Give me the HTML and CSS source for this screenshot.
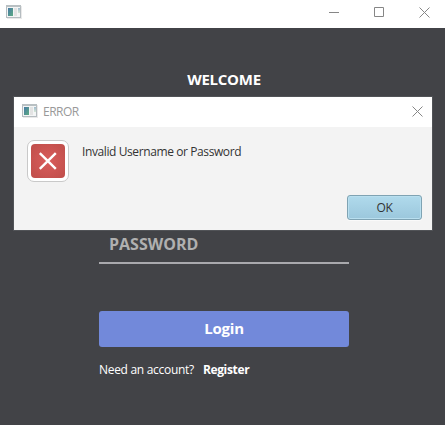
FILE: index.html
```html
<!DOCTYPE html>
<html lang="en">
<head>
<meta charset="utf-8">
<title>Login</title>
<link rel="stylesheet" href="styles.css">
</head>
<body>
<svg width="0" height="0" class="defs">
  <defs>
    <linearGradient id="pane" x1="0" y1="0" x2="1" y2="1"><stop offset="0" stop-color="#4779a5"/><stop offset="1" stop-color="#5cab82"/></linearGradient>
    <linearGradient id="side" x1="0" y1="0" x2="0" y2="1"><stop offset="0" stop-color="#9fbbd0"/><stop offset="1" stop-color="#d5e6d4"/></linearGradient>
    <symbol id="app" viewBox="0 0 16 14">
      <rect x="1" y="1" width="15" height="13" fill="#e9e9e9"/>
      <rect x=".5" y=".5" width="14" height="12" fill="#f3f5f5" stroke="#b5bcc0"/>
      <rect x="0" y="0" width="15" height="2" fill="#b9c0c3"/>
      <rect x="2" y="3" width="5" height="8" fill="url(#pane)"/>
      <rect x="8" y="3" width="3" height="8" fill="#e3e3e3"/>
      <rect x="12" y="3" width="2" height="5" fill="url(#side)"/>
    </symbol>
  </defs>
</svg>
<header class="titlebar">
  <svg class="app-icon" width="16" height="14"><use href="#app"/></svg>
  <div class="controls">
    <svg width="10" height="10"><path d="M0 5.5H10"/></svg>
    <svg width="10" height="10"><path d="M.5.5h9v9h-9z"/></svg>
    <svg width="11" height="11"><path d="M.5.5l10 10M10.5.5l-10 10"/></svg>
  </div>
</header>
<main class="window">
  <h1>WELCOME</h1>
  <form class="login">
    <div class="field"><span class="password">PASSWORD</span></div>
    <button class="submit" type="button"><span>Login</span></button>
    <p class="signup"><span class="need">Need an account?</span><b>Register</b></p>
  </form>
</main>
<section class="dialog" role="alertdialog">
  <header class="dialog-title">
    <svg class="app-icon" width="16" height="14"><use href="#app"/></svg>
    <span class="caption">ERROR</span>
    <svg class="close" width="11" height="11"><path d="M.5.5l10 10M10.5.5l-10 10"/></svg>
  </header>
  <div class="message">
    <div class="error-icon"><svg width="34" height="34"><path d="M8.8 9.2l16 15.6M24.8 9.2l-16 15.6"/></svg></div>
    <span class="text">Invalid Username or Password</span>
  </div>
  <button class="ok" type="button">OK</button>
</section>
</body>
</html>
```

FILE: styles.css
```css
* { box-sizing: border-box; }
body { margin: 0; width: 445px; height: 425px; overflow: hidden; background: #424347; color: #fff; font-family: "Open Sans", "Noto Sans", sans-serif; font-size: 12px; white-space: nowrap; }
svg { display: block; flex: none; }
.defs { position: absolute; }
.titlebar { height: 28px; background: #fff; display: flex; justify-content: space-between; padding: 5px 15px 0 6px; }
.controls { display: flex; gap: 35px; padding-top: 2px; }
.controls svg, .close { fill: none; stroke: #868686; stroke-width: 1; }
.window { height: 397px; padding-top: 41px; }
h1 { margin: 0; padding-left: 3px; font-size: 15px; line-height: 20px; text-align: center; letter-spacing: -.25px; }
.login { width: 250px; margin: 144px 0 0 99px; }
.field { height: 31px; padding-left: 10px; border-bottom: 2px solid #a9a9ad; color: #b0b0b0; font-size: 16px; font-weight: 700; line-height: 22px; }
.submit { display: block; width: 250px; height: 36px; margin-top: 47px; padding: 0; border: 0; border-radius: 3px; background: #7289da; color: #fff; font: 700 15px/36px "Open Sans", sans-serif; letter-spacing: -.2px; }
.submit span { display: block; margin-top: -2px; }
.signup { display: flex; gap: 9px; margin: 14px 0 0; line-height: 18px; letter-spacing: -.3px; }
.signup b { letter-spacing: -.35px; }
.dialog { position: absolute; left: 13px; top: 96px; width: 420px; height: 135px; border: 1px solid #515357; background: #f3f3f3; color: #333; }
.dialog-title { height: 30px; background: #fff; display: flex; align-items: center; padding: 0 9px 2px 8px; }
.caption { margin-left: 5px; color: #999; letter-spacing: -.5px; }
.close { margin-left: auto; }
.message { display: flex; padding: 13px 13px 0; }
.error-icon { width: 42px; height: 42px; padding: 3px; border: 1px solid #c9c9c9; border-radius: 7px; background: #fff; }
.error-icon svg { border-radius: 4px; background: radial-gradient(circle, #d95c5b, #bf4e4a); fill: none; stroke: #fff; stroke-width: 2.4; }
.text { margin: 3px 0 0 13px; line-height: 18px; letter-spacing: -.4px; }
.ok { display: block; width: 75px; height: 25px; margin: 13px 10px 0 auto; padding: 0; border: 1px solid #7fa3b3; border-radius: 3px; background: linear-gradient(#b0daec, #9bc7dc); box-shadow: inset 0 0 0 1px #b9dfef, 0 1px #fafafa; color: #333; font: 12px/23px "Open Sans", sans-serif; letter-spacing: -.4px; }
```
